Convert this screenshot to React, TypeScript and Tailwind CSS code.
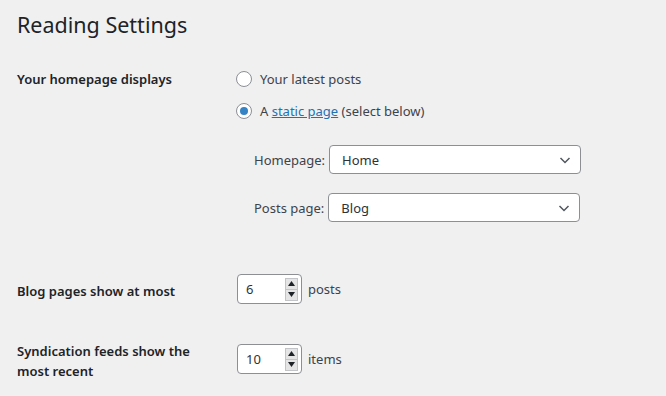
import React from "react";

function Radio({ checked }: { checked?: boolean }) {
  return (
    <span className="flex h-4 w-4 shrink-0 items-center justify-center rounded-full border border-[#8c8f94] bg-white">
      {checked && <span className="h-2 w-2 rounded-full bg-[#3582c4]" />}
    </span>
  );
}

function Select({ value }: { value: string }) {
  return (
    <div className="flex h-[29px] w-[252px] items-center justify-between rounded-[4px] border border-[#8c8f94] bg-white pl-3 pr-2 text-[#2c3338]">
      <span>{value}</span>
      <svg width="14" height="14" viewBox="0 0 14 14" fill="none">
        <path d="M2.5 5l4.5 4.5L11.5 5" stroke="#50575e" strokeWidth="1.5" />
      </svg>
    </div>
  );
}

function NumberInput({ value }: { value: string }) {
  return (
    <div className="flex h-[30px] w-[65px] items-center justify-between rounded-[4px] border border-[#8c8f94] bg-white pl-2 pr-[3px] text-[#2c3338]">
      <span>{value}</span>
      <div className="flex h-[23px] w-[13px] flex-col border border-[#c3c4c7] bg-[#e5e5e5]">
        <div className="flex flex-1 items-center justify-center border-b border-[#c3c4c7]">
          <svg width="7" height="5" viewBox="0 0 7 5">
            <path d="M0 5L3.5 0L7 5Z" fill="#1d2327" />
          </svg>
        </div>
        <div className="flex flex-1 items-center justify-center">
          <svg width="7" height="5" viewBox="0 0 7 5">
            <path d="M0 0L3.5 5L7 0Z" fill="#1d2327" />
          </svg>
        </div>
      </div>
    </div>
  );
}

export default function App() {
  return (
    <div
      className="min-h-[396px] bg-[#f0f0f1] pl-[17px] pt-[10px] text-[13px] leading-[20px] text-[#3c434a]"
      style={{ fontFamily: '"Noto Sans", "Open Sans", sans-serif' }}
    >
      <h1 className="text-[21.5px] font-normal leading-[29px] text-[#1d2327]">Reading Settings</h1>

      {/* Row 1 */}
      <div className="mt-[30px] flex">
        <div className="w-[219px] font-semibold text-[#1d2327]">Your homepage displays</div>
        <div className="flex flex-col">
          <div className="flex items-center gap-[8px]">
            <Radio />
            <span>Your latest posts</span>
          </div>
          <div className="mt-[12px] flex items-center gap-[8px]">
            <Radio checked />
            <span>
              A <span className="text-[#2271b1] underline">static page</span> (select below)
            </span>
          </div>
          <div className="ml-[18px] mt-[24px] flex flex-col gap-[19px]">
            <div className="flex items-center gap-[4px]">
              <span>Homepage:</span>
              <Select value="Home" />
            </div>
            <div className="flex items-center gap-[4px]">
              <span>Posts page:</span>
              <Select value="Blog" />
            </div>
          </div>
        </div>
      </div>

      {/* Row 2 */}
      <div className="mt-[52px] flex">
        <div className="w-[220px] pt-[7px] font-semibold text-[#1d2327]">Blog pages show at most</div>
        <div className="flex items-center gap-[6px]">
          <NumberInput value="6" />
          <span>posts</span>
        </div>
      </div>

      {/* Row 3 */}
      <div className="mt-[37px] flex">
        <div className="w-[220px] pr-[30px] font-semibold text-[#1d2327]">Syndication feeds show the most recent</div>
        <div className="flex items-center gap-[6px] self-start pt-[3px]">
          <NumberInput value="10" />
          <span>items</span>
        </div>
      </div>
    </div>
  );
}
